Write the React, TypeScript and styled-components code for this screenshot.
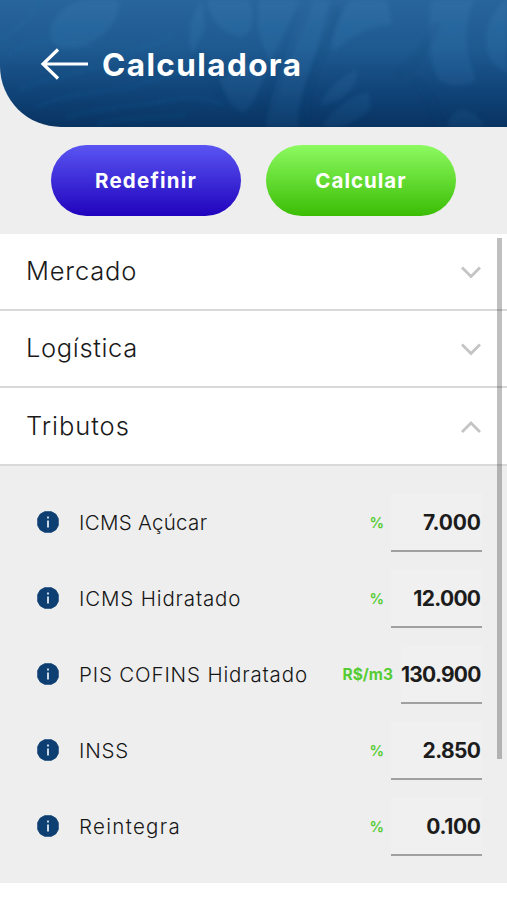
import React from "react";
import styled, { createGlobalStyle } from "styled-components";

const GlobalStyle = createGlobalStyle`
  * { box-sizing: border-box; }
  body { margin: 0; background: #fff; font-family: Inter, "Open Sans", sans-serif; }
  button { font-family: inherit; }
`;

const Screen = styled.main`
  position: relative;
  width: 507px;
  height: 900px;
  overflow: hidden;
  background: #fff;
`;

const Upper = styled.div`
  height: 234px;
  background: #eeeeee;
`;

const Header = styled.header`
  position: relative;
  height: 127px;
  border-bottom-left-radius: 61px;
  overflow: hidden;
  background: linear-gradient(180deg, #28659c 0%, #1e5a90 38%, #11457a 70%, #083361 100%);
  display: flex;
  align-items: center;
  padding-left: 40px;
  gap: 14px;
`;

const Texture = styled.svg`
  position: absolute;
  inset: 0;
`;

const BackIcon = styled.svg`
  position: relative;
  flex: none;
  margin-top: 1px;
`;

const Title = styled.h1<{ $track: number }>`
  position: relative;
  margin: 3px 0 0;
  color: #fff;
  font-size: 31.5px;
  line-height: 40px;
  font-weight: 650;
  letter-spacing: ${(p) => p.$track}px;
  white-space: nowrap;
`;

const Actions = styled.div`
  display: flex;
  gap: 25px;
  padding: 18px 0 0 51px;
`;

const Pill = styled.button<{ $from: string; $to: string; $track: number }>`
  width: 190px;
  height: 71px;
  padding: 0;
  border: 0;
  border-radius: 36px;
  color: #fff;
  font-size: 20.5px;
  font-weight: 700;
  letter-spacing: ${(p) => p.$track}px;
  background: linear-gradient(180deg, ${(p) => p.$from}, ${(p) => p.$to});
`;

const SectionRow = styled.div<{ $height: number }>`
  height: ${(p) => p.$height}px;
  display: flex;
  align-items: center;
  justify-content: space-between;
  padding: 0 25px 0 26px;
  background: #fff;
  border-bottom: 2px solid #d9d9d9;
`;

const SectionName = styled.span<{ $track: number }>`
  margin-top: -1px;
  color: #1a1a1a;
  font-size: 25.5px;
  line-height: 34px;
  font-weight: 300;
  letter-spacing: ${(p) => p.$track}px;
`;

const Panel = styled.div`
  height: 417px;
  padding-top: 18px;
  background: #eeeeee;
`;

const Field = styled.div`
  height: 76px;
  display: flex;
  align-items: center;
  padding: 0 25px 0 37px;
`;

const FieldName = styled.span<{ $track: number }>`
  flex: 1;
  margin-left: 20px;
  color: #161616;
  font-size: 20.5px;
  font-weight: 300;
  letter-spacing: ${(p) => p.$track}px;
  white-space: nowrap;
`;

const Unit = styled.span<{ $wide: boolean; $track: number }>`
  margin-right: ${(p) => (p.$wide ? 8 : 7)}px;
  color: #55cc33;
  font-size: ${(p) => (p.$wide ? 15.5 : 14.5)}px;
  font-weight: ${(p) => (p.$wide ? 700 : 600)};
  letter-spacing: ${(p) => p.$track}px;
  white-space: nowrap;
`;

const Value = styled.span<{ $width: number; $track: number }>`
  width: ${(p) => p.$width}px;
  height: 59px;
  padding-right: ${(p) => 1 - p.$track}px;
  line-height: 60px;
  border-bottom: 2px solid #a0a0a0;
  background: #f0f0f0;
  color: #1c1c1c;
  font-size: 21px;
  font-weight: 700;
  letter-spacing: ${(p) => p.$track}px;
  text-align: right;
  white-space: nowrap;
`;

const ScrollThumb = styled.div`
  position: absolute;
  top: 238px;
  right: 5px;
  width: 5px;
  height: 521px;
  background: rgba(0, 0, 0, 0.25);
`;

const sections = [
  { name: "Mercado", track: 0.8, height: 77, open: false },
  { name: "Logística", track: 0.65, height: 77, open: false },
  { name: "Tributos", track: 0.95, height: 78, open: true },
];

const fields = [
  { name: "ICMS Açúcar", track: 0.3, unit: "%", value: "7.000", valueTrack: -0.1 },
  { name: "ICMS Hidratado", track: 0.85, unit: "%", value: "12.000", valueTrack: -0.7 },
  { name: "PIS COFINS Hidratado", track: 0.84, unit: "R$/m3", value: "130.900", valueTrack: -0.75 },
  { name: "INSS", track: 0.8, unit: "%", value: "2.850", valueTrack: -0.6 },
  { name: "Reintegra", track: 1.3, unit: "%", value: "0.100", valueTrack: -0.3 },
];

const Chevron = ({ up }: { up: boolean }) => (
  <svg width="22" height="16" viewBox="0 0 22 16" fill="none" stroke="#c4c4c4" strokeWidth="2.8">
    <path d={up ? "M2 14L11 5L20 14" : "M2 3.5L11 12.5L20 3.5"} />
  </svg>
);

const InfoIcon = () => (
  <svg width="22" height="22" viewBox="0 0 22 22">
    <path d="M7.5 .8H14.5L18.8 3.2L21.2 7.5V14.5L18.8 18.8L14.5 21.2H7.5L3.2 18.8L.8 14.5V7.5L3.2 3.2Z" fill="#0d3f72" stroke="#0d3f72" strokeWidth="1" strokeLinejoin="round" />
    <path d="M10 5.5h2v2h-2zM10 9.5h2v7h-2z" fill="#c7d7e6" />
  </svg>
);

const Leaves = () => (
  <Texture width="507" height="127" viewBox="0 0 507 127">
    <defs>
      <filter id="soft" x="-20%" y="-20%" width="140%" height="140%">
        <feGaussianBlur stdDeviation="2.2" />
      </filter>
      <linearGradient id="fade" x1="0" y1="0" x2="0" y2="127" gradientUnits="userSpaceOnUse">
        <stop offset="0" stopColor="#3a80ba" stopOpacity=".26" />
        <stop offset="1" stopColor="#3a80ba" stopOpacity=".12" />
      </linearGradient>
    </defs>
    <g filter="url(#soft)">
      <g fill="url(#fade)">
        <path d="M50 34C49 20 64 5 83 0H119C120 18 109 33 92 42C76 51 54 54 50 34Z" />
        <path d="M207 0C209 20 224 34 242 37C252 34 254 20 250 0Z" />
        <path d="M202 0C190 16 186 36 192 54L205 28Z" />
        <path d="M259 0C255 25 261 45 270 62L300 0Z" />
        <path d="M220 80C224 94 233 111 244 112C255 105 260 86 266 72L244 62Z" />
        <path d="M302 0C297 35 274 70 266 127H298C297 90 315 67 330 0Z" />
        <path d="M350 0C336 20 331 35 333 52C357 30 378 24 392 25L387 0Z" />
        <path d="M431 0C427 38 430 60 438 79C453 90 469 84 476 80C461 39 466 20 474 0Z" />
        <path d="M507 0C487 14 482 40 490 60L507 73Z" />
        <path d="M320 105C329 85 342 77 357 70C359 87 340 105 320 105Z" />
        <path d="M322 125C340 103 355 94 369 93L371 108C360 119 348 127 330 127Z" />
        <path d="M447 127C452 105 472 103 485 127Z" />
      </g>
      <g fill="none" stroke="#397caf" strokeWidth="3" opacity=".15">
        <path d="M0 40C18 30 31 18 42 0M7 57C28 40 54 34 92 48M18 91C45 74 78 80 115 58C135 49 155 47 173 34M35 108C72 89 119 94 146 82C169 74 187 72 202 67M66 118C104 105 140 108 173 99C194 95 209 99 223 105M97 125C125 116 153 120 186 115" />
      </g>
      <g fill="none" stroke="#073361" strokeWidth="9" opacity=".1">
        <path d="M308 0C301 36 280 60 269 113M339 9C327 50 301 78 306 127M196 52C204 68 216 81 225 98M437 23C427 50 414 66 397 75M414 79C431 94 434 112 440 127" />
      </g>
    </g>
  </Texture>
);

export default function App() {
  return (
    <Screen>
      <GlobalStyle />
      <Upper>
        <Header>
          <Leaves />
          <BackIcon width="48" height="32" viewBox="0 0 48 32" fill="none" stroke="#fff" strokeWidth="3.2">
            <path d="M18 1.5L3 16L18 30.5M3 16H48" />
          </BackIcon>
          <Title $track={1.4}>Calculadora</Title>
        </Header>
        <Actions>
          <Pill $from="#5a55f2" $to="#2003bd" $track={1.2}>Redefinir</Pill>
          <Pill $from="#8cfa60" $to="#3bbd05" $track={1}>Calcular</Pill>
        </Actions>
      </Upper>
      {sections.map((s) => (
        <SectionRow key={s.name} $height={s.height}>
          <SectionName $track={s.track}>{s.name}</SectionName>
          <Chevron up={s.open} />
        </SectionRow>
      ))}
      <Panel>
        {fields.map((f) => (
          <Field key={f.name}>
            <InfoIcon />
            <FieldName $track={f.track}>{f.name}</FieldName>
            <Unit $wide={f.unit !== "%"} $track={0}>{f.unit}</Unit>
            <Value $width={f.unit === "%" ? 91 : 81} $track={f.valueTrack}>{f.value}</Value>
          </Field>
        ))}
      </Panel>
      <ScrollThumb />
    </Screen>
  );
}
